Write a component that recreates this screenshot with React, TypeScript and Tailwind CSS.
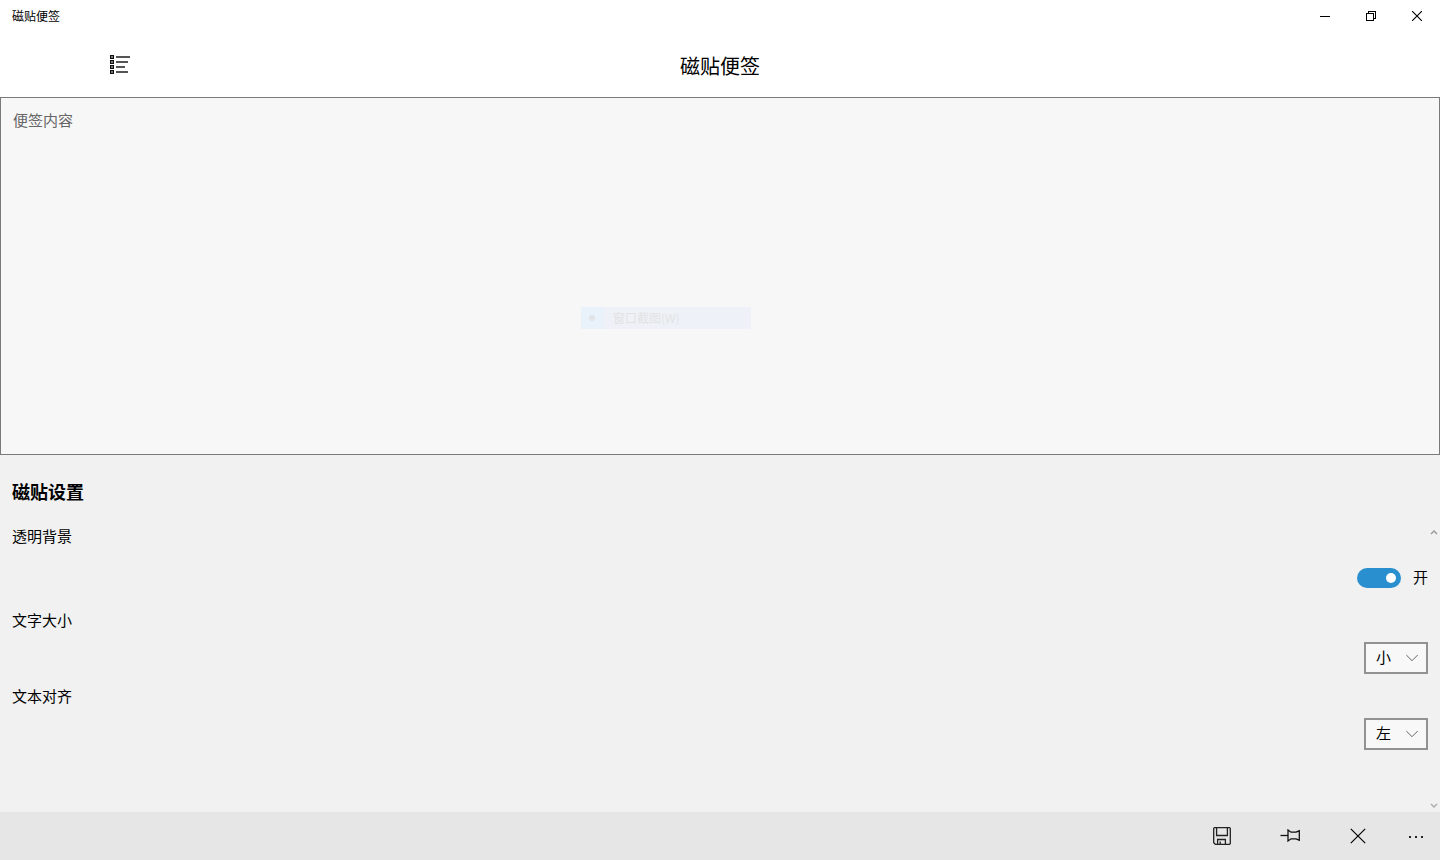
import { useState } from "react";

const captionButton =
  "flex h-8 w-[46px] items-center justify-center hover:bg-black/10";
const commandButton =
  "flex h-12 w-[68px] items-center justify-center hover:bg-black/10";

function TitleBar() {
  return (
    <div className="flex h-8 items-center justify-between pl-3">
      <span className="text-xs">磁贴便签</span>
      <div className="flex">
        <button type="button" aria-label="最小化" className={captionButton}>
          <svg width="10" height="10" viewBox="0 0 10 10" shapeRendering="crispEdges">
            <path d="M0 5.5H10" stroke="#000" />
          </svg>
        </button>
        <button type="button" aria-label="向下还原" className={captionButton}>
          <svg width="10" height="10" viewBox="0 0 10 10" fill="none" stroke="#000" shapeRendering="crispEdges">
            <path d="M0.5 2.5H7.5V9.5H0.5Z" />
            <path d="M2.5 2.5V0.5H9.5V7.5H7.5" />
          </svg>
        </button>
        <button type="button" aria-label="关闭" className={captionButton}>
          <svg width="10" height="10" viewBox="0 0 10 10" stroke="#000" strokeWidth="1.1">
            <path d="M0 0L10 10M10 0L0 10" />
          </svg>
        </button>
      </div>
    </div>
  );
}

function Header() {
  return (
    <header className="grid h-[65px] grid-cols-[1fr_auto_1fr] items-center">
      <button
        type="button"
        aria-label="便签列表"
        className="ml-24 flex size-12 items-center justify-center"
      >
        <svg width="20" height="20" viewBox="0 0 20 20" shapeRendering="crispEdges">
          {[0, 5, 10, 15].map((y) => (
            <g key={y}>
              <rect x="0" y={y} width="4" height="4" fill="#111" />
              <rect x="1" y={y + 1} width="2" height="2" fill="#777" />
            </g>
          ))}
          <g fill="#555">
            <rect x="6" y="1" width="14" height="2" />
            <rect x="6" y="6" width="12" height="2" />
            <rect x="6" y="11" width="9" height="2" />
            <rect x="6" y="16" width="12" height="2" />
          </g>
        </svg>
      </button>
      <h1 className="pt-0.5 text-xl font-normal">磁贴便签</h1>
    </header>
  );
}

function Choice({ id, label, options }: { id: string; label: string; options: string[] }) {
  return (
    <div className="flex flex-col gap-3">
      <label htmlFor={id} className="leading-5">
        {label}
      </label>
      <div className="relative self-end">
        <select
          id={id}
          className="block h-8 w-16 appearance-none border-2 border-[#929292] bg-[#f8f8f8] pl-[10px] text-[15px] outline-none"
        >
          {options.map((option) => (
            <option key={option}>{option}</option>
          ))}
        </select>
        <svg
          className="pointer-events-none absolute right-[10px] top-3"
          width="12"
          height="8"
          viewBox="0 0 12 8"
          fill="none"
          stroke="#666"
        >
          <path d="M0.3 1L6 6.7L11.7 1" />
        </svg>
      </div>
    </div>
  );
}

function ScrollRail() {
  return (
    <div className="absolute inset-y-0 right-0 flex w-3 flex-col items-center justify-between bg-[#f1f1f1] py-[3px]">
      <svg width="8" height="6" viewBox="0 0 8 6" fill="none" stroke="#999" strokeWidth="1.4">
        <path d="M1 5L4 2L7 5" />
      </svg>
      <svg width="8" height="6" viewBox="0 0 8 6" fill="none" stroke="#aaa" strokeWidth="1.4">
        <path d="M1 1L4 4L7 1" />
      </svg>
    </div>
  );
}

function Settings() {
  const [transparent, setTransparent] = useState(true);
  return (
    <section className="flex flex-col pt-[22px]">
      <h2 className="px-3 text-lg font-bold">磁贴设置</h2>
      <div className="relative mt-[21px] flex-1">
        <ScrollRail />
        <div className="relative flex flex-col gap-3 px-3 pb-4">
          <div className="flex flex-col">
            <span id="transparent-label" className="leading-5">
              透明背景
            </span>
            <label className="mt-[22px] mb-[10px] flex h-5 items-center gap-3 self-end">
              <input
                type="checkbox"
                role="switch"
                aria-labelledby="transparent-label"
                checked={transparent}
                onChange={(event) => setTransparent(event.target.checked)}
                className="peer sr-only"
              />
              <span className="flex h-5 w-11 items-center rounded-full bg-[#999] px-[5px] peer-checked:justify-end peer-checked:bg-[#2a8fce]">
                <span className="size-[10px] rounded-full bg-white" />
              </span>
              <span>{transparent ? "开" : "关"}</span>
            </label>
          </div>
          <Choice id="font-size" label="文字大小" options={["小", "中", "大"]} />
          <Choice id="text-align" label="文本对齐" options={["左", "中", "右"]} />
        </div>
      </div>
    </section>
  );
}

function CommandBar() {
  return (
    <footer className="flex h-12 justify-end bg-[#e6e6e6]">
      <button type="button" aria-label="保存" className={commandButton}>
        <svg width="18" height="18" viewBox="0 0 18 18" fill="none" stroke="#222" strokeWidth="1.3">
          <path d="M1.4 0.7H16.6L17.3 1.4V16.6L16.6 17.3H2.4L0.7 15.8V1.4Z" />
          <path d="M3.6 0.7V8.5H14.4V0.7" />
          <path d="M4.6 17.3V12.5H12.4V17.3" />
          <path d="M7.2 14.4V17.3" />
        </svg>
      </button>
      <button type="button" aria-label="固定" className={commandButton}>
        <svg width="20" height="14" viewBox="0 0 20 14" fill="none" stroke="#111" strokeWidth="1.3">
          <path d="M0.5 6.5H8" />
          <path d="M8 1V12L11 9.8H16L19.3 11.2V1.8L16 3.2H11Z" />
        </svg>
      </button>
      <button type="button" aria-label="取消" className={commandButton}>
        <svg width="16" height="16" viewBox="0 0 16 16" stroke="#000" strokeWidth="1.2">
          <path d="M0.8 0.8L15.2 15.2M15.2 0.8L0.8 15.2" />
        </svg>
      </button>
      <button
        type="button"
        aria-label="更多"
        className="flex size-12 items-center justify-center hover:bg-black/10"
      >
        <svg width="14" height="4" viewBox="0 0 14 4" fill="#222" shapeRendering="crispEdges">
          <path d="M0 2H2V4H0ZM6 2H8V4H6ZM12 2H14V4H12Z" />
        </svg>
      </button>
    </footer>
  );
}

export default function App() {
  return (
    <div className="flex min-h-screen flex-col bg-[#f1f1f1] font-['Noto_Sans_CJK_SC',sans-serif] text-[15px] text-black">
      <div className="bg-white">
        <TitleBar />
        <Header />
      </div>
      <main className="grid flex-1 auto-rows-fr">
        <div className="relative flex">
          <textarea
            aria-label="便签内容"
            placeholder="便签内容"
            className="w-full resize-none border border-[#7a7a7a] bg-[#f7f7f7] px-3 py-[11px] leading-[22px] outline-none placeholder:text-[#666]"
          />
          <div className="pointer-events-none absolute left-[581px] top-[210px] flex h-[22px] w-[170px] items-center bg-[#eef2f8] text-xs text-[#e2e2e2]">
            <span className="flex size-[22px] items-center justify-center bg-[#e9f1fa]">
              <span className="size-[6px] rounded-full bg-[#e2e5e8]" />
            </span>
            <span className="pl-[10px]">窗口截图(W)</span>
          </div>
        </div>
        <Settings />
      </main>
      <CommandBar />
    </div>
  );
}
